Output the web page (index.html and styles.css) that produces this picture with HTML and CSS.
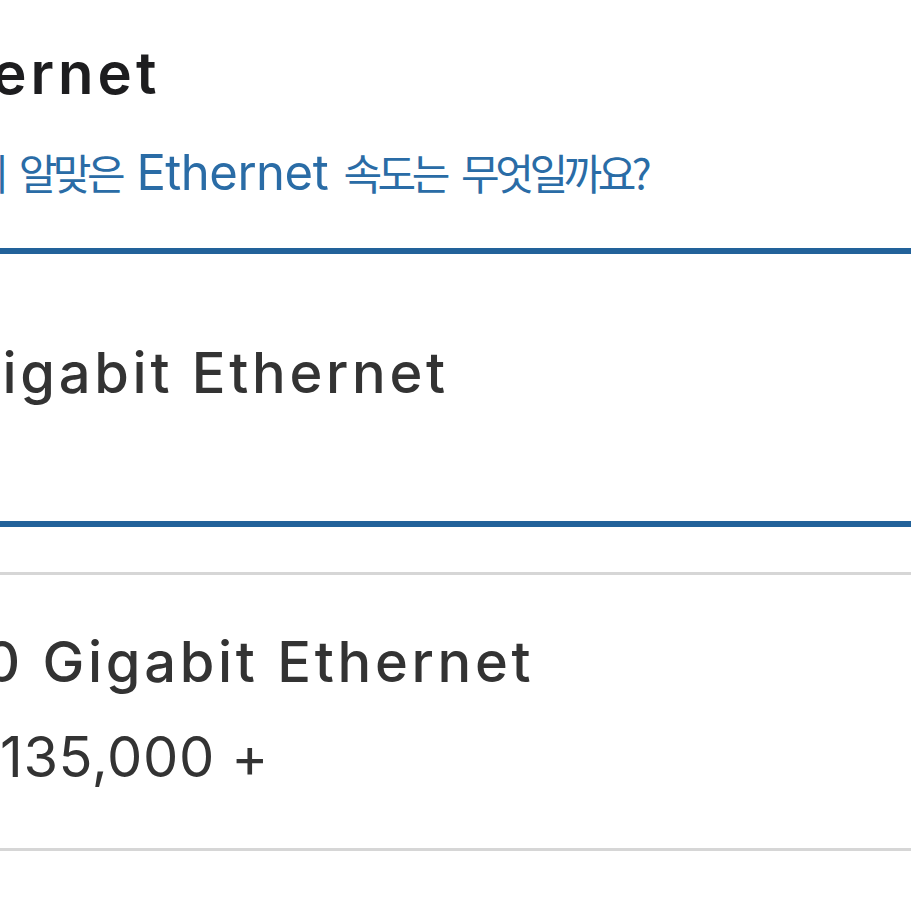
FILE: index.html
```html
<!DOCTYPE html>
<html lang="ko">
<head>
<meta charset="utf-8">
<title>Ethernet</title>
<link rel="stylesheet" href="styles.css">
</head>
<body>
<main class="section">
  <header class="section-head">
    <h2 class="title">Ethernet</h2>
    <a class="help-link" href="#">나에게 알맞은 <span class="latin">Ethernet</span> 속도는 무엇일까요?</a>
  </header>
  <div class="options">
    <div class="option selected">
      <span class="option-name">Gigabit Ethernet</span>
    </div>
    <div class="option">
      <span class="option-name">10 Gigabit Ethernet</span>
      <span class="option-price">₩135,000 +</span>
    </div>
  </div>
</main>
</body>
</html>
```

FILE: styles.css
```css
html, body {
  margin: 0;
  padding: 0;
  background: #ffffff;
  overflow: hidden;
}

body {
  width: 911px;
  height: 911px;
  font-family: Inter, "Noto Sans CJK KR", sans-serif;
}

.section {
  display: flex;
  flex-direction: column;
}

.section-head {
  display: flex;
  flex-direction: column;
  padding-top: 41px;
}

.title {
  margin: 0 0 0 -111px;
  font-size: 58px;
  line-height: 64px;
  font-weight: 600;
  color: #1d1d1f;
  letter-spacing: 4px;
  white-space: nowrap;
}

.help-link {
  margin: 37px 0 0 -99px;
  font-family: "Noto Sans CJK KR", sans-serif;
  font-size: 42px;
  line-height: 60px;
  font-weight: 400;
  color: #2a6ca6;
  letter-spacing: -4.5px;
  word-spacing: 8px;
  text-decoration: none;
  white-space: nowrap;
}

.help-link .latin {
  font-family: Inter, sans-serif;
  font-size: 49px;
  letter-spacing: -0.5px;
}

.options {
  display: flex;
  flex-direction: column;
  gap: 45px;
  margin-top: 45px;
  margin-left: -60px;
  margin-right: -60px;
}

.option {
  display: flex;
  flex-direction: column;
  height: 279px;
  box-sizing: border-box;
  border: 3px solid #d6d6d6;
  border-radius: 36px;
  padding: 40px 0 0 14px;
  color: #333333;
}

.option.selected {
  border: 6px solid #22629a;
  padding-top: 72px;
  padding-left: 11px;
}

.option-name,
.option-price {
  font-size: 56px;
  line-height: 95px;
  white-space: nowrap;
}

.option-name {
  font-weight: 500;
  letter-spacing: 3.7px;
}

.option-price {
  font-weight: 400;
  letter-spacing: 0.6px;
  margin-left: -11px;
}
```
